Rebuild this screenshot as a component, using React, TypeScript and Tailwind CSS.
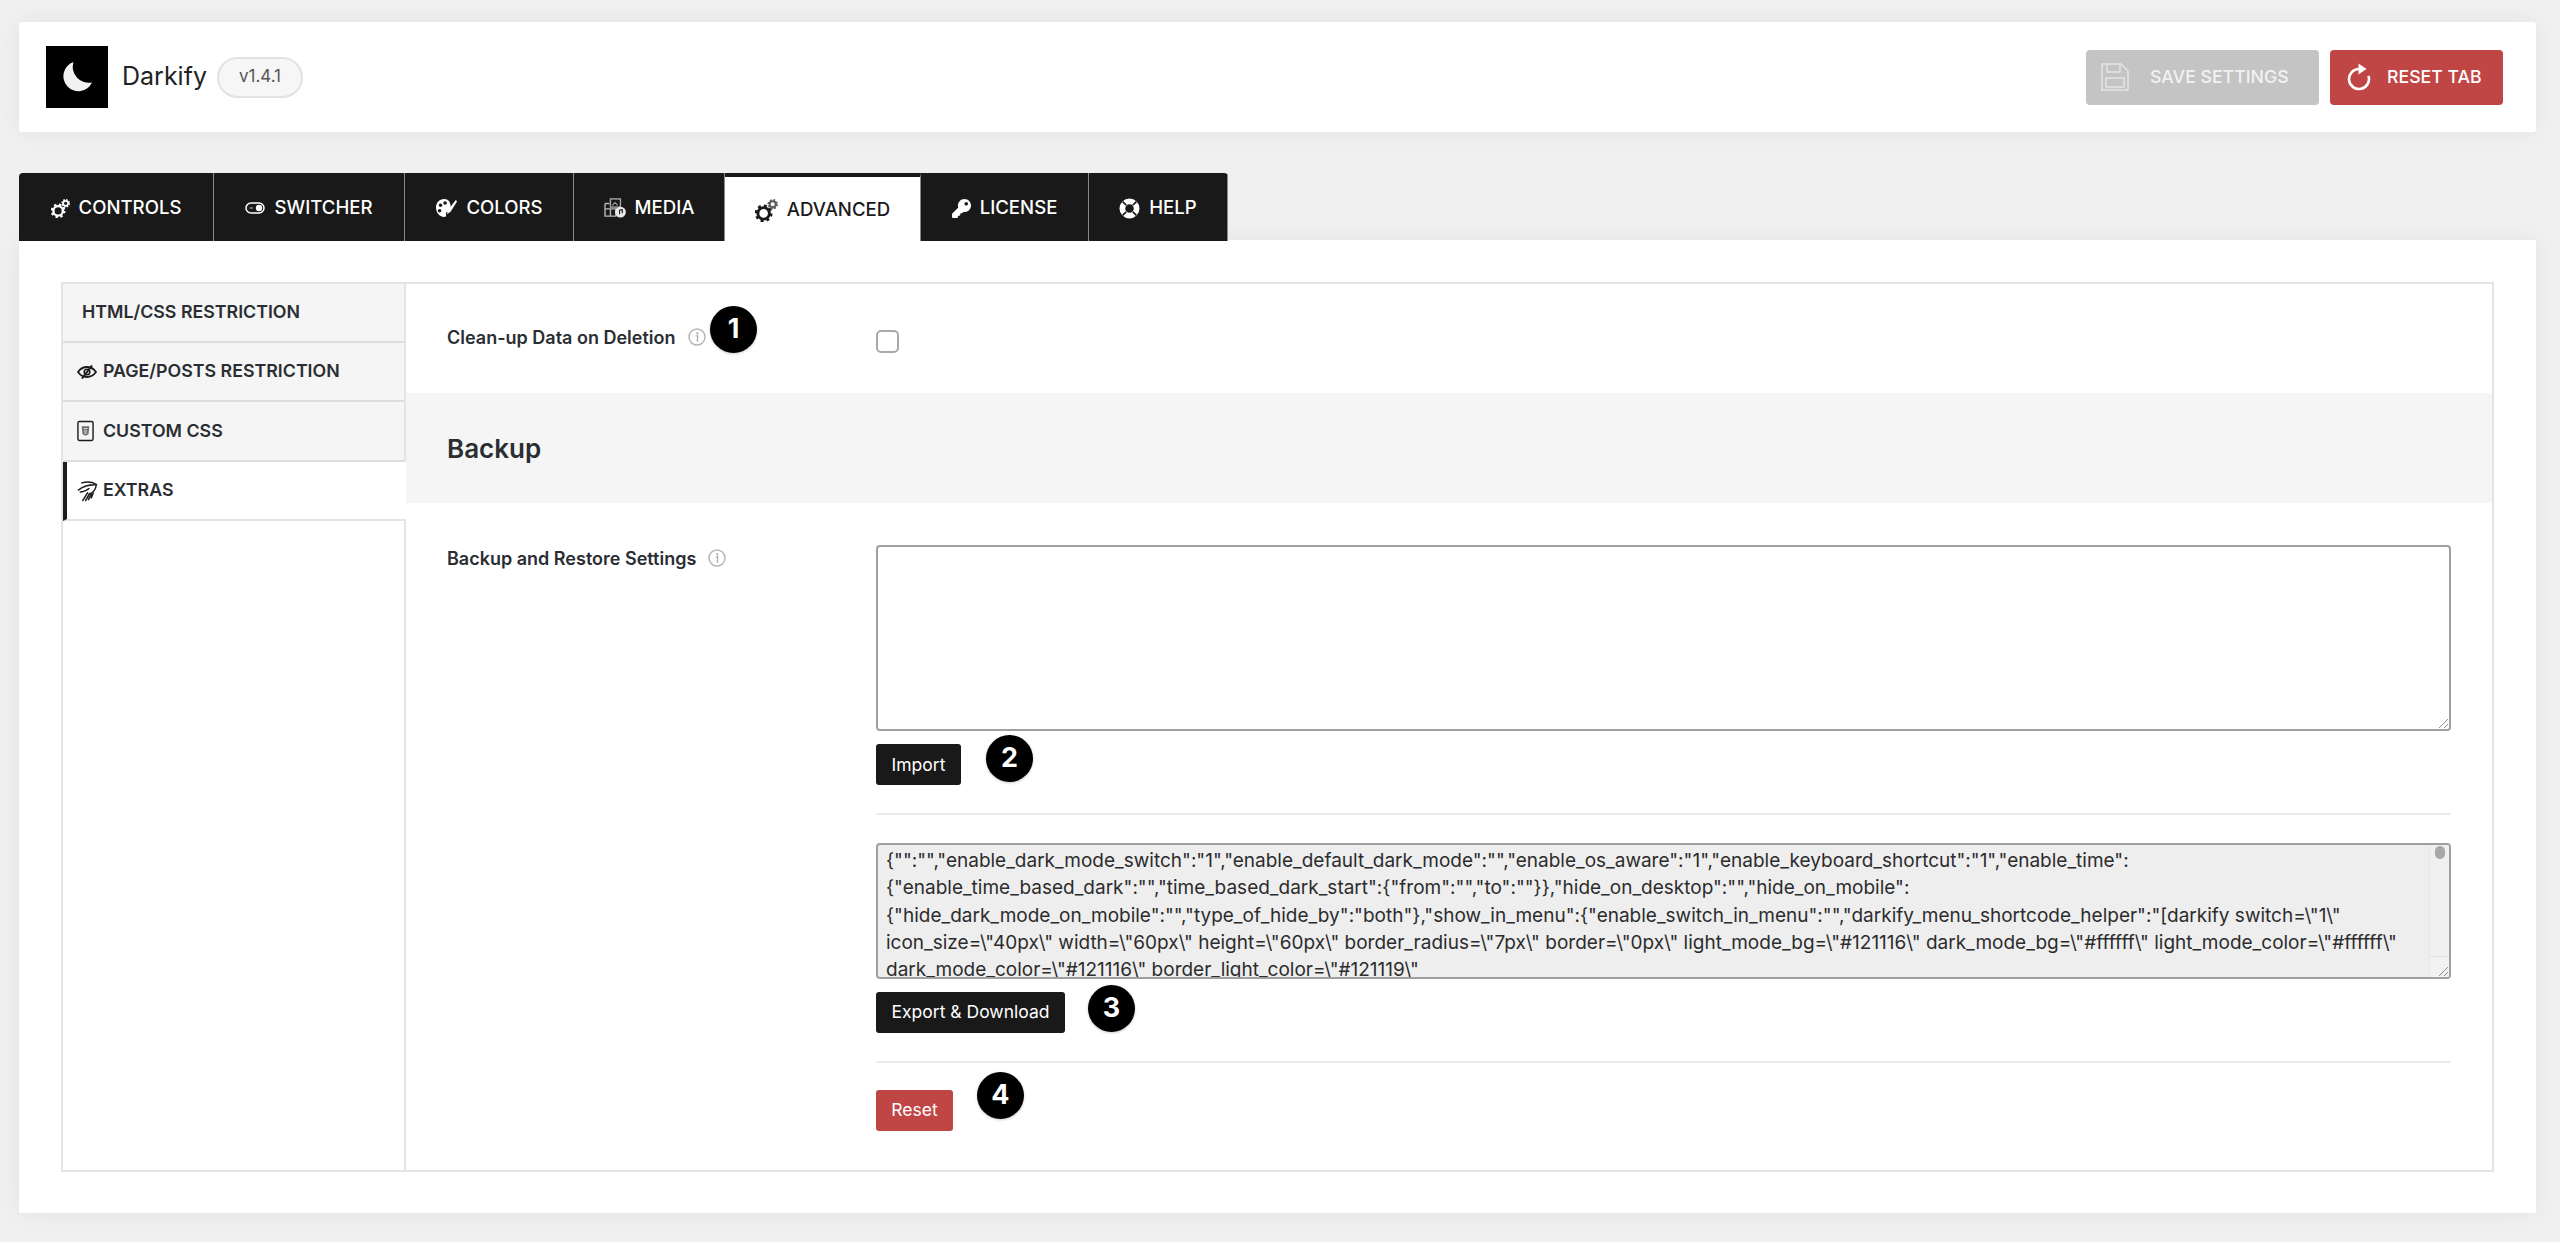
import React from 'react';
import { FaKey } from 'react-icons/fa';

const font = "font-['Inter','Liberation_Sans',sans-serif]";

const InfoIcon = () => (
  <svg viewBox="0 0 18 18" className="h-[18px] w-[18px] shrink-0" fill="none">
    <circle cx="9" cy="9" r="8" stroke="#b5b5b5" strokeWidth="1.5" />
    <circle cx="9.3" cy="5.3" r="1.1" fill="#a8a8a8" />
    <path d="M7.800 7.800h2l-.6 5h1.100" stroke="#a8a8a8" strokeWidth="1.2" />
  </svg>
);

const Badge = ({ n, className }: { n: number; className: string }) => (
  <span className={`absolute flex h-[47px] w-[47px] items-center justify-center rounded-full bg-black text-[27px] font-bold text-white shadow-[0_1px_3px_rgba(0,0,0,0.2)] ${className}`}>
    {n}
  </span>
);

// two gears, big one lower left, small one upper right
const GearsIcon = ({ size, small }: { size: number; small: string }) => (
  <svg viewBox="0 0 24 24" width={size} height={size} fill="none">
    <circle cx="9" cy="15" r="6" stroke="currentColor" strokeWidth="3" />
    <circle cx="9" cy="15" r="8" stroke="currentColor" strokeWidth="2.6" strokeDasharray="3.100 3.180" />
    <circle cx="18.500" cy="5.500" r="3.200" stroke={small} strokeWidth="2.200" />
    <circle cx="18.500" cy="5.500" r="4.600" stroke={small} strokeWidth="1.800" strokeDasharray="2 1.610" />
  </svg>
);

const ToggleIcon = () => (
  <svg viewBox="0 0 20 12" className="h-[12px] w-[20px]" fill="none">
    <rect x="1" y="1" width="18" height="10" rx="5" stroke="currentColor" strokeWidth="1.500" />
    <circle cx="14" cy="6" r="3.200" fill="currentColor" />
    <path d="M4.500 6h3.500" stroke="currentColor" strokeWidth="1" opacity="0.7" />
  </svg>
);

const PaletteIcon = () => (
  <svg viewBox="0 0 24 22" className="h-[20px] w-[22px]">
    <path
      fillRule="evenodd"
      fill="currentColor"
      d="M10 1C4.500 1 1 5 1 10.500 1 16.500 5.500 21 10 21c2 0 2.500-1.300 2-3-.5-1.800 .5-3 2.500-3h2c1-3 1-7-.5-10.500C15 2 12.500 1 10 1zM6 6a2 2 0 1 1 0 4 2 2 0 0 1 0-4zm5-2.500a2 2 0 1 1 0 4 2 2 0 0 1 0-4zM5 12a2 2 0 1 1 0 4 2 2 0 0 1 0-4z"
    />
    <path d="M23 2L14.500 13l-1.500 5 4-3L24 4z" fill="currentColor" />
  </svg>
);

const MediaIcon = () => (
  <svg viewBox="0 0 24 22" className="h-[20px] w-[22px]" fill="none">
    <rect x="7" y="1" width="11" height="9" stroke="#a9a9a9" strokeWidth="1.500" />
    <path d="M9 8l3-3 3 3" stroke="#a9a9a9" strokeWidth="1.200" />
    <path d="M1 6h5M1 6v14h12v-8H1M7 12v8" stroke="#b9b9b9" strokeWidth="1.500" />
    <circle cx="18" cy="15.500" r="6" fill="#e8e8e8" />
    <path d="M17 18v-4.500l3-.7v4" stroke="#191919" strokeWidth="1.200" />
  </svg>
);

const RingIcon = () => (
  <svg viewBox="0 0 22 22" className="h-[21px] w-[21px]" fill="none">
    <circle cx="11" cy="11" r="7.500" stroke="#fff" strokeWidth="6" />
    <path d="M3.800 3.800l3.800 3.800M18.200 3.800l-3.800 3.800M3.800 18.200l3.800-3.800M18.200 18.200l-3.800-3.800" stroke="#191919" strokeWidth="1.800" />
  </svg>
);

const EyeOffIcon = () => (
  <svg viewBox="0 0 20 14" className="h-[14px] w-[20px]" fill="none" stroke="#1c1c1c">
    <path d="M1 7c2.500-3.500 5.500-5 9-5s6.500 1.500 9 5c-2.500 3.500-5.500 5-9 5S3.500 10.500 1 7z" strokeWidth="1.800" />
    <circle cx="10" cy="7" r="2.800" strokeWidth="1.600" />
    <path d="M5 13.500L15 .5" strokeWidth="2" />
  </svg>
);

const CssFileIcon = () => (
  <svg viewBox="0 0 18 22" className="h-[22px] w-[17px]" fill="none">
    <rect x="1" y="1" width="16" height="20" rx="1.500" stroke="#1c1c1c" strokeWidth="1.500" />
    <path d="M5 6h8l-.8 8.500L9 16l-3.200-1.500z" fill="#6d6d6d" />
    <path d="M7 8.500h4M7.300 11h3.400M7.500 13.200h3" stroke="#eee" strokeWidth="1" />
  </svg>
);

const ExtrasIcon = () => (
  <svg viewBox="0 0 22 22" className="h-[22px] w-[21px]" fill="none" stroke="#1c1c1c" strokeWidth="1.600" strokeLinecap="round">
    <path d="M5 2.500c5-1.500 11-1 15 1.500-3 1-5 1-7 1" />
    <path d="M1.500 10c4-3 9-5 13-5" />
    <path d="M3.500 12c3 0 6-1.500 9-3.500" />
    <path d="M20 5c0 4-3 8-7 9" />
    <path d="M6 21l5-8M9 21l4-7M12 20l3-6M15 18l2-5" />
  </svg>
);

const Grip = () => (
  <svg viewBox="0 0 12 12" className="absolute bottom-0 right-0 h-[12px] w-[12px]" fill="none" stroke="#8c8c8c" strokeWidth="1">
    <path d="M2 11L11 2M7 11l4-4" />
  </svg>
);

const tabs = [
  { label: 'CONTROLS', icon: <GearsIcon size={19} small="currentColor" />, w: 'w-[195px]' },
  { label: 'SWITCHER', icon: <ToggleIcon />, w: 'w-[191px]' },
  { label: 'COLORS', icon: <PaletteIcon />, w: 'w-[169px]' },
  { label: 'MEDIA', icon: <MediaIcon />, w: 'w-[151px]' },
  { label: 'ADVANCED', icon: <GearsIcon size={23} small="#5e5e5e" />, w: 'w-[196px]', active: true },
  { label: 'LICENSE', icon: <FaKey className="h-[19px] w-[19px]" />, w: 'w-[168px]' },
  { label: 'HELP', icon: <RingIcon />, w: 'w-[139px]' },
];

const jsonLines = [
  '{"":"","enable_dark_mode_switch":"1","enable_default_dark_mode":"","enable_os_aware":"1","enable_keyboard_shortcut":"1","enable_time":',
  '{"enable_time_based_dark":"","time_based_dark_start":{"from":"","to":""}},"hide_on_desktop":"","hide_on_mobile":',
  '{"hide_dark_mode_on_mobile":"","type_of_hide_by":"both"},"show_in_menu":{"enable_switch_in_menu":"","darkify_menu_shortcode_helper":"[darkify switch=\\"1\\"',
  'icon_size=\\"40px\\" width=\\"60px\\" height=\\"60px\\" border_radius=\\"7px\\" border=\\"0px\\" light_mode_bg=\\"#121116\\" dark_mode_bg=\\"#ffffff\\" light_mode_color=\\"#ffffff\\"',
  'dark_mode_color=\\"#121116\\" border_light_color=\\"#121119\\"',
];

const App: React.FC = () => (
  <div className={`min-h-[1242px] bg-[#f0f0f1] px-[19px] pt-[22px] text-[#2a2e33] ${font}`}>
    {/* top bar */}
    <header className="flex h-[110px] w-[2517px] items-center justify-between rounded-[3px] bg-white pl-[27px] pr-[33px] shadow-[0_0_24px_rgba(0,0,0,0.06)]">
      <div className="flex items-center">
        <div className="flex h-[62px] w-[62px] items-center justify-center bg-black">
          <svg viewBox="0 0 30 30" className="h-[30px] w-[30px]">
            <path d="M11.500 0A15 15 0 1 0 30 20.500 16 16 0 0 1 11.500 0z" fill="#f2f2f2" />
          </svg>
        </div>
        <span className="ml-[14px] text-[25px] text-[#222]">Darkify</span>
        <span className="ml-[10px] flex h-[41px] w-[86px] items-center justify-center rounded-full border-2 border-[#e2e2e2] bg-[#f6f6f6] text-[17px] text-[#555]">v1.4.1</span>
      </div>
      <div className="flex gap-[11px]">
        <button className="flex h-[55px] w-[233px] items-center rounded-[4px] bg-[#c4c4c4] pl-[15px] text-[17.700px] font-medium text-[#f2f2f2]">
          <svg viewBox="0 0 28 28" className="h-[28px] w-[28px]" fill="none" stroke="#e4e4e4" strokeWidth="1.500">
            <path d="M1 1h19l7 7v19H1z" />
            <path d="M6 1v8h13V1M5 15h18v9H5z" />
          </svg>
          <span className="ml-[21px]">SAVE SETTINGS</span>
        </button>
        <button className="flex h-[55px] w-[173px] items-center rounded-[4px] bg-[#c04545] pl-[17px] text-[17.700px] font-medium text-white">
          <svg viewBox="0 0 24 28" className="h-[28px] w-[24px]" fill="none" stroke="#fff" strokeWidth="2.600">
            <path d="M12 6A10 10 0 1 0 21.500 12.900" />
            <path d="M11.500 0.500l8 5.500-8 5.500z" fill="#fff" stroke="none" />
          </svg>
          <span className="ml-[16px]">RESET TAB</span>
        </button>
      </div>
    </header>

    {/* tab strip */}
    <nav className="mt-[41px] flex h-[68px] w-fit overflow-hidden rounded-t-[4px]">
      {tabs.map((t) => (
        <div
          key={t.label}
          className={`flex items-center justify-center gap-[9px] border-r border-[#8a8a8a] pt-[2px] text-[18.600px] font-medium ${t.w} ${
            t.active ? 'border-t-[4px] border-t-[#191919] bg-white text-[#1b1b1b]' : 'bg-[#191919] text-white'
          }`}
        >
          {t.icon}
          {t.label}
        </div>
      ))}
    </nav>

    {/* main panel */}
    <main className="-mt-[1px] w-[2517px] bg-white px-[42px] pb-[41px] pt-[42px] shadow-[0_0_24px_rgba(0,0,0,0.06)]">
      <div className="flex h-[890px] border-2 border-[#e4e4e4]">
        <aside className="w-[343px] shrink-0 border-r-2 border-[#e4e4e4] text-[17.800px] font-semibold">
          <div className="flex h-[59px] items-center border-b-2 border-[#dedede] bg-[#f5f5f5] pl-[19px]">HTML/CSS RESTRICTION</div>
          <div className="flex h-[59px] items-center gap-[6px] border-b-2 border-[#dedede] bg-[#f5f5f5] pl-[14px]">
            <EyeOffIcon />PAGE/POSTS RESTRICTION
          </div>
          <div className="flex h-[60px] items-center gap-[9px] border-b-2 border-[#dedede] bg-[#f5f5f5] pl-[14px]">
            <CssFileIcon />CUSTOM CSS
          </div>
          <div className="-mr-[2px] flex h-[59px] items-center gap-[5px] border-b-2 border-l-[4px] border-[#e4e4e4] border-l-[#1c1c1c] bg-white pl-[10px]">
            <ExtrasIcon />EXTRAS
          </div>
        </aside>

        <section className="min-w-0 flex-1">
          <div className="flex h-[109px] pl-[41px] pt-[41px]">
            <div className="relative flex h-[24px] w-[429px] items-center gap-[12px] text-[18px] font-semibold">
              Clean-up Data on Deletion
              <InfoIcon />
              <Badge n={1} className="left-[263px] -top-[19px]" />
            </div>
            <span className="mt-[5px] h-[23px] w-[23px] rounded-[5px] border-2 border-[#a9a9a9] bg-white" />
          </div>

          <div className="flex h-[110px] items-center bg-[#f5f5f5] pl-[41px] text-[26px] font-semibold">Backup</div>

          <div className="flex pl-[41px] pt-[42px] pr-[41px]">
            <div className="mt-[1px] flex h-[24px] w-[429px] shrink-0 items-center gap-[12px] text-[18px] font-semibold">
              Backup and Restore Settings
              <InfoIcon />
            </div>
            <div className="min-w-0 flex-1">
              <div className="relative h-[186px] rounded-[4px] border-2 border-[#a0a0a0] bg-white">
                <Grip />
              </div>
              <div className="relative mt-[13px] h-[41px]">
                <button className="h-[41px] w-[85px] rounded-[3px] bg-[#191919] pt-[1px] text-[17.500px] text-white">Import</button>
                <Badge n={2} className="left-[110px] -top-[9px]" />
              </div>
              <div className="mt-[28px] h-[2px] bg-[#ebebeb]" />
              <div className="relative mt-[28px] h-[136px] overflow-hidden rounded-[4px] border-2 border-[#a0a0a0] bg-[#eeeeef] pl-[8px] pt-[2px] text-[19px] leading-[27.300px] text-[#2c2c2c]">
                {jsonLines.map((line) => (
                  <div key={line} className="whitespace-pre">{line}</div>
                ))}
                <div className="absolute bottom-0 right-0 top-0 w-[20px] border-l border-[#e6e6e6] bg-[#f0f0f1]">
                  <div className="mx-auto mt-[1px] h-[13px] w-[10px] rounded-full bg-[#a8a8a8]" />
                  <div className="absolute bottom-0 left-0 right-0 h-[21px] border-t border-[#e2e2e2] bg-[#f2f2f3]" />
                </div>
                <Grip />
              </div>
              <div className="relative mt-[13px] h-[41px]">
                <button className="h-[41px] w-[189px] rounded-[3px] bg-[#191919] text-[17.500px] text-white">Export &amp; Download</button>
                <Badge n={3} className="left-[212px] -top-[7px]" />
              </div>
              <div className="mt-[28px] h-[2px] bg-[#ebebeb]" />
              <div className="relative mt-[27px] h-[41px]">
                <button className="h-[41px] w-[77px] rounded-[3px] bg-[#c04545] text-[17.500px] text-white">Reset</button>
                <Badge n={4} className="left-[101px] -top-[18px]" />
              </div>
            </div>
          </div>
        </section>
      </div>
    </main>
  </div>
);

export default App;
